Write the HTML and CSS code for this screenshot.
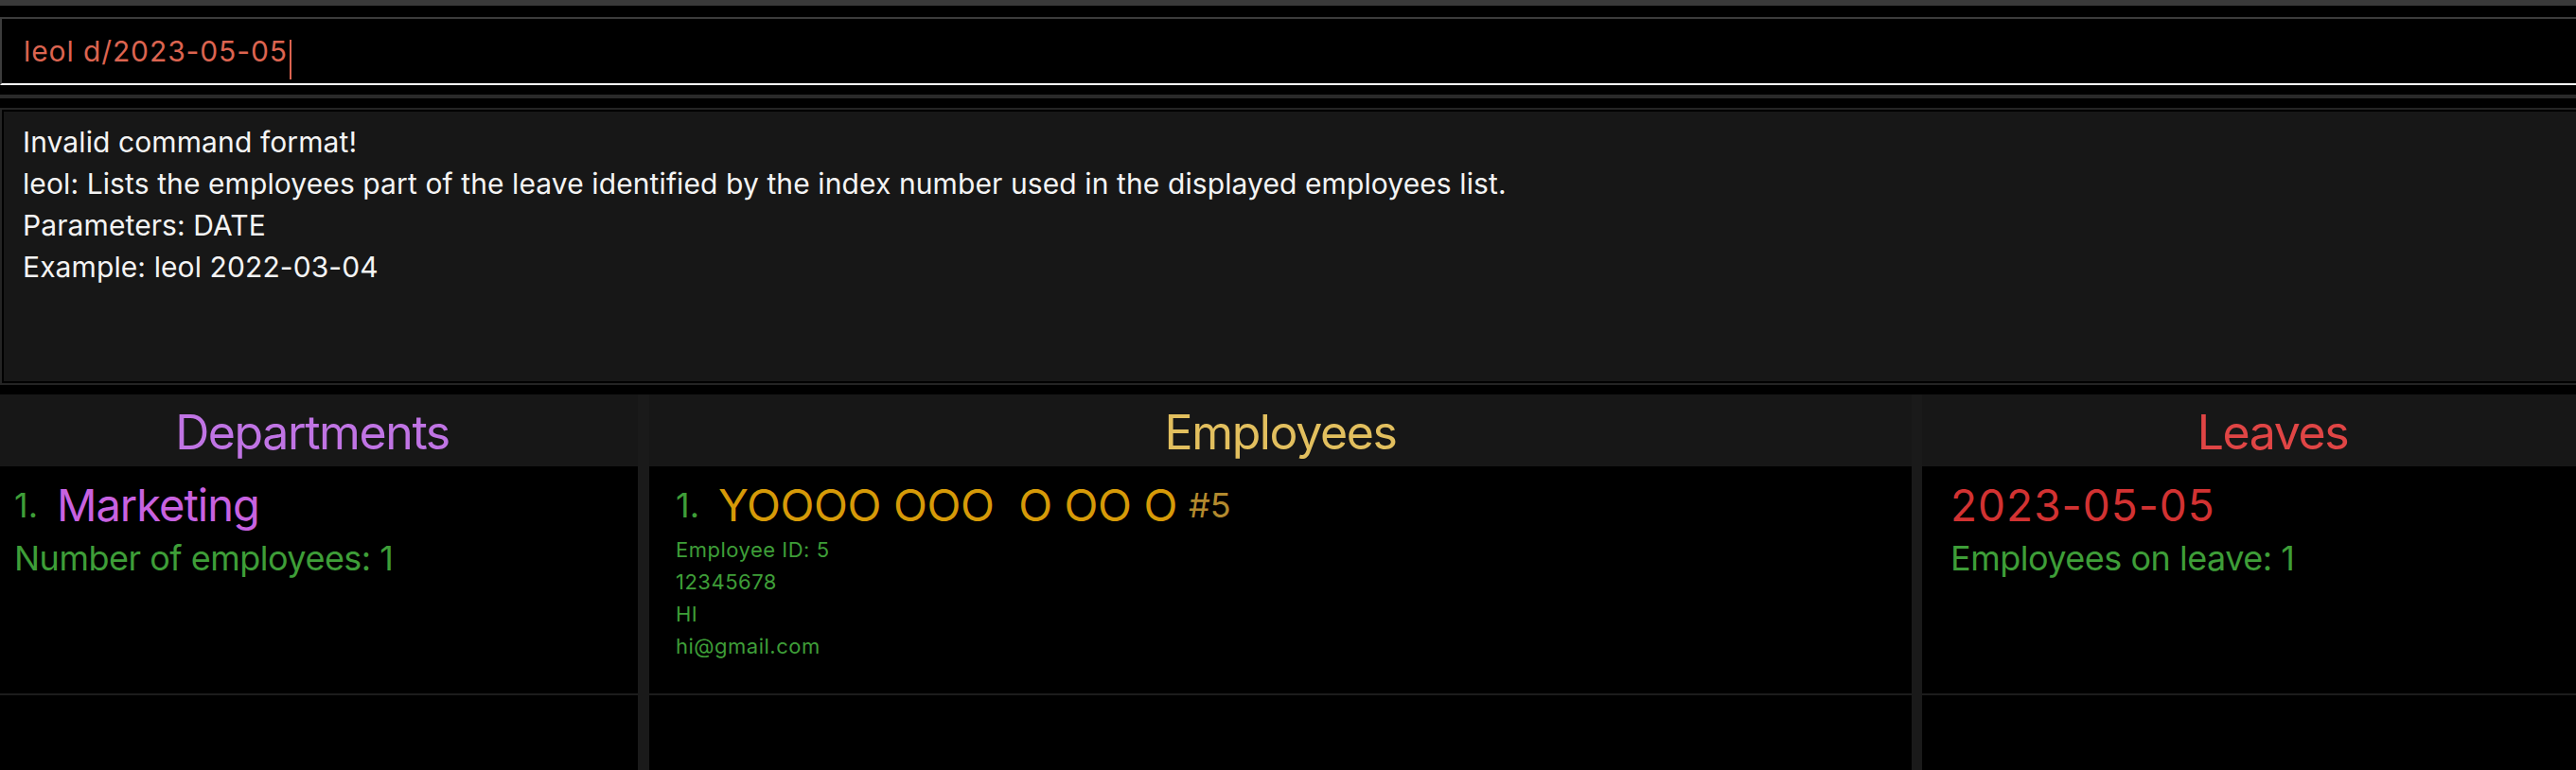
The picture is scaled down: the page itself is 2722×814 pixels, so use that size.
FILE: index.html
```html
<!DOCTYPE html>
<html lang="en">
<head>
<meta charset="utf-8">
<title>Command result</title>
<link rel="stylesheet" href="styles.css">
</head>
<body>
<div class="app">
  <div class="topbar"></div>
  <div class="command">
    <span class="cmd-text">leol d/2023-05-05</span><span class="caret"></span>
  </div>
  <div class="split-divider"></div>
  <div class="result">
    <p class="result-line">Invalid command format!</p>
    <p class="result-line">leol: Lists the employees part of the leave identified by the index number used in the displayed employees list.</p>
    <p class="result-line">Parameters: DATE</p>
    <p class="result-line">Example: leol 2022-03-04</p>
  </div>
  <div class="panels">
    <section class="panel panel-dept">
      <div class="panel-header dept-title">Departments</div>
      <ul class="list">
        <li class="cell dept-cell">
          <div class="cell-title-row">
            <span class="index">1.</span>
            <span class="dept-name">Marketing</span>
          </div>
          <div class="info">Number of employees: 1</div>
        </li>
      </ul>
    </section>
    <div class="vdivider"></div>
    <section class="panel panel-emp">
      <div class="panel-header emp-title">Employees</div>
      <ul class="list">
        <li class="cell emp-cell">
          <div class="cell-title-row">
            <span class="index">1.</span>
            <span class="emp-name">YOOOO OOO  O OO O</span>
            <span class="emp-tag">#5</span>
          </div>
          <div class="details">
            <div class="detail">Employee ID: 5</div>
            <div class="detail">12345678</div>
            <div class="detail">HI</div>
            <div class="detail">hi@gmail.com</div>
          </div>
        </li>
      </ul>
    </section>
    <div class="vdivider"></div>
    <section class="panel panel-leave">
      <div class="panel-header leave-title">Leaves</div>
      <ul class="list">
        <li class="cell leave-cell">
          <div class="cell-title-row">
            <span class="leave-date">2023-05-05</span>
          </div>
          <div class="info">Employees on leave: 1</div>
        </li>
      </ul>
    </section>
  </div>
</div>
</body>
</html>
```
FILE: styles.css
```css
html, body {
  margin: 0;
  padding: 0;
  background: #000;
  overflow: hidden;
}

body {
  width: 2722px;
  height: 814px;
  font-family: Inter, "Noto Sans", "Liberation Sans", sans-serif;
}

.app {
  width: 2772px;
  height: 814px;
  display: flex;
  flex-direction: column;
}

.topbar {
  height: 6px;
  background: #3a3a3a;
  flex: none;
}

.command {
  margin-top: 12px;
  height: 72px;
  box-sizing: border-box;
  border-top: 2px solid #3c3c3c;
  border-left: 2px solid #3c3c3c;
  border-bottom: 2px solid #ffffff;
  display: flex;
  align-items: flex-start;
  padding-left: 23px;
  flex: none;
}

.cmd-text {
  font-size: 30px;
  line-height: 68px;
  color: #dc6450;
  letter-spacing: 0.9px;
}

.caret {
  width: 2px;
  height: 42px;
  margin-top: 22px;
  margin-left: 2px;
  background: #dc6450;
}

.split-divider {
  margin-top: 10px;
  height: 4px;
  background: #2a2a2a;
  flex: none;
}

.result {
  margin-top: 10px;
  height: 293px;
  box-sizing: border-box;
  border: 2px solid #242424;
  border-right: none;
  box-shadow: inset 0 0 0 2px #000;
  background: #171717;
  padding: 12px 22px;
  flex: none;
}

.result-line {
  margin: 0;
  font-size: 30px;
  line-height: 44px;
  color: #f4f4f4;
  letter-spacing: 0.1px;
}

.panels {
  margin-top: 10px;
  flex: 1;
  display: flex;
  min-height: 0;
}

.panel {
  display: flex;
  flex-direction: column;
}

.panel-dept { width: 674px; }
.panel-emp { width: 1334px; }
.panel-leave { width: 741px; }

.vdivider {
  width: 12px;
  background: #1a1a1a;
  flex: none;
}

.panel-emp + .vdivider { width: 11px; }

.panel-header {
  height: 76px;
  background: #171717;
  text-align: center;
  font-size: 50px;
  line-height: 76px;
  padding-top: 2px;
  box-sizing: border-box;
  letter-spacing: -1.4px;
}

.dept-title { color: #c074e4; padding-right: 14px; }
.emp-title { color: #e2bf5e; }
.leave-title { color: #e04545; }

.list {
  list-style: none;
  margin: 0;
  padding: 0;
  flex: 1;
}

.cell {
  height: 242px;
  box-sizing: border-box;
  border-bottom: 2px solid #1c1c1c;
  padding-top: 13px;
}

.dept-cell { padding-left: 15px; }
.emp-cell { padding-left: 28px; }
.leave-cell { padding-left: 30px; }

.cell-title-row {
  display: flex;
  align-items: center;
  height: 56px;
}

.index {
  font-size: 36px;
  line-height: 44px;
  color: #3e9e38;
  margin-right: 20px;
}

.dept-name {
  font-size: 47px;
  line-height: 56px;
  color: #c862e0;
  letter-spacing: -1px;
}

.emp-name {
  font-size: 47px;
  line-height: 56px;
  color: #d69a08;
  white-space: pre;
  letter-spacing: -0.4px;
}

.emp-tag {
  font-size: 36px;
  line-height: 44px;
  color: #b38a2e;
  margin-left: 12px;
}

.leave-date {
  font-size: 46px;
  line-height: 56px;
  color: #d23232;
  letter-spacing: 1px;
}

.info {
  margin-top: 6px;
  font-size: 36px;
  line-height: 44px;
  color: #3e9e38;
  letter-spacing: -0.5px;
}

.details {
  margin-top: 2px;
}

.detail {
  font-size: 22px;
  line-height: 34px;
  color: #3e9e38;
  letter-spacing: 0.5px;
}
```
